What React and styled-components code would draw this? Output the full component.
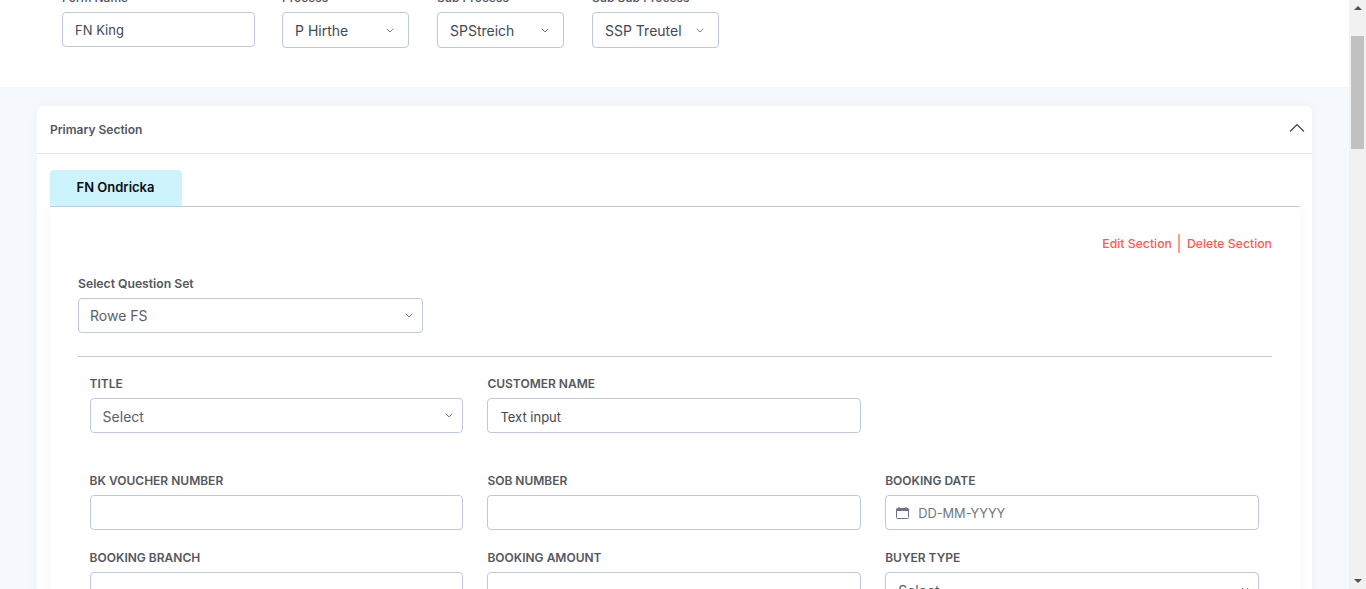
import React from 'react';
import styled, { createGlobalStyle } from 'styled-components';

const GlobalStyle = createGlobalStyle`
  html, body { margin: 0; padding: 0; height: 100%; overflow: hidden; background: #fff; }
  body { font-family: Inter, "Noto Sans", sans-serif; color: #4f5156; }
  * { box-sizing: border-box; }
`;

const Screen = styled.div`
  display: flex;
  width: 1366px;
  height: 589px;
  overflow: hidden;
`;

const Page = styled.main`
  flex: 1;
  min-width: 0;
  height: 589px;
  overflow: hidden;
  background: #f5f8fd;
`;

const TopBar = styled.section`
  display: flex;
  align-items: flex-start;
  gap: 28px;
  height: 117px;
  margin-top: -30px;
  padding: 24px 0 0 62px;
  background: #fff;
`;

const TopField = styled.div`
  display: flex;
  flex-direction: column;
  gap: 10px;
  width: ${p => p.$width}px;
  margin-right: ${p => p.$gapFix || 0}px;
`;

const TopLabel = styled.label`
  font-size: 12px;
  line-height: 8px;
  font-weight: 500;
  color: #4f5156;
  white-space: nowrap;
`;

const Box = styled.div`
  display: flex;
  align-items: center;
  justify-content: space-between;
  height: ${p => p.$height || 35}px;
  padding: 0 ${p => p.$padRight || 9}px 0 ${p => p.$padLeft || 12}px;
  background: #fff;
  border: 1px solid #bfc7da;
  border-radius: 4px;
  font-size: ${p => p.$small ? 13 : 14}px;
  color: ${p => p.$muted ? '#5b6068' : '#45484f'};
  white-space: nowrap;
`;

const BoxValue = styled.span`
  padding-top: ${p => p.$drop}px;
`;

const Card = styled.section`
  margin: 19px 37px 0;
  background: #fff;
  border-radius: 6px 6px 0 0;
  box-shadow: 0 0 10px rgba(120, 140, 190, 0.06);
`;

const CardHeader = styled.header`
  display: flex;
  align-items: center;
  justify-content: space-between;
  height: 48px;
  padding: 0 7px 0 13px;
  border-bottom: 1px solid #e3e5ea;
`;

const CardTitle = styled.h2`
  margin: 0;
  font-size: 12px;
  font-weight: 600;
  color: #55575c;
`;

const CollapseIcon = styled.svg`
  margin-bottom: 3px;
`;

const CardBody = styled.div`
  padding: 16px 12px 0 13px;
`;

const Tabs = styled.nav`
  display: flex;
  border-bottom: 1px solid #c5cbde;
`;

const Tab = styled.button`
  width: 132px;
  height: 36px;
  padding: 0 1px 2px 0;
  border: 0;
  border-radius: 4px 4px 0 0;
  background: #cdf3fd;
  font-family: inherit;
  font-size: 13px;
  font-weight: 600;
  color: #0c0d10;
`;

const Panel = styled.div`
  padding: 27px 28px 0;
  background: #fff;
  box-shadow: 0 0 12px rgba(120, 140, 190, 0.07);
`;

const SectionActions = styled.div`
  display: flex;
  justify-content: flex-end;
  align-items: center;
  height: 19px;
  font-size: 12.25px;
  font-weight: 500;
  color: #fb5b4f;
`;

const ActionLink = styled.a`
  padding: ${p => p.$first ? '0 6px 0 0' : '0 0 0 7px'};
  line-height: 19px;
  border-left: ${p => p.$first ? '0' : '2px solid #fba07f'};
`;

const QuestionSet = styled.div`
  display: flex;
  flex-direction: column;
  gap: 7px;
  width: 345px;
  margin-top: 24px;
`;

const QuestionLabel = styled.label`
  font-size: 12.2px;
  line-height: 14px;
  font-weight: 600;
  color: #55575c;
  white-space: nowrap;
`;

const FieldLabel = styled.label`
  padding-top: 1px;
  font-size: 12px;
  line-height: 14px;
  font-weight: 600;
  color: #55575c;
  white-space: nowrap;
`;

const Divider = styled.hr`
  height: 1px;
  margin: 23px 0 0;
  border: 0;
  background: #c5cbde;
`;

const FieldGrid = styled.div`
  display: grid;
  grid-template-columns: repeat(3, 1fr);
  column-gap: 24px;
  row-gap: 20px;
  margin: ${p => p.$top}px 13px 0 11.6px;
`;

const Field = styled.div`
  display: flex;
  flex-direction: column;
  gap: 7px;
`;

const DateValue = styled.span`
  display: flex;
  align-items: center;
  gap: 9px;
  margin-left: -2px;
  font-size: 12.8px;
  color: #707780;
`;

const ScrollTrack = styled.aside`
  display: flex;
  flex-direction: column;
  align-items: center;
  justify-content: space-between;
  width: 17px;
  height: 589px;
  padding: 6px 0;
  background: #f1f1f1;
`;

const ScrollArrow = styled.span`
  width: 0;
  height: 0;
  border-left: 4px solid transparent;
  border-right: 4px solid transparent;
  ${p => p.$up ? 'border-bottom: 4px solid #505050;' : 'border-top: 4px solid #505050;'}
`;

const ScrollThumb = styled.div`
  position: absolute;
  top: 36px;
  left: 1351px;
  width: 13px;
  height: 113px;
  background: #c1c1c1;
`;

const Chevron = () => (
  <svg width="8" height="5" viewBox="0 0 8 5" fill="none" stroke="#7a808c" strokeWidth="1">
    <path d="M.8.8 4 4 7.2.8" />
  </svg>
);

const ChevronUp = () => (
  <CollapseIcon width="16" height="16" viewBox="0 0 16 16" fill="none" stroke="#3c3d40" strokeWidth="1.1">
    <path d="M1 11.5 8 4.5l7 7" />
  </CollapseIcon>
);

const CalendarIcon = () => (
  <svg width="13" height="12" viewBox="0 0 13 12" fill="none">
    <path d="M3 0v2M10 0v2" stroke="#6c7585" strokeWidth="1.2" />
    <rect x=".5" y="1.5" width="12" height="10" rx="1" stroke="#6c7585" strokeWidth="1" />
    <rect x=".5" y="1.5" width="12" height="2.5" fill="#6c7585" />
  </svg>
);

const topFields = [
  { label: 'Form Name', value: 'FN King', width: 193, input: true },
  { label: 'Process', value: 'P Hirthe', width: 127 },
  { label: 'Sub Process', value: 'SPStreich', width: 127 },
  { label: 'Sub Sub Process', value: 'SSP Treutel', width: 127 },
];

const firstRow = [
  { label: 'TITLE', value: 'Select', select: true },
  { label: 'CUSTOMER NAME', value: 'Text input' },
];

const lowerFields = [
  { label: 'BK VOUCHER NUMBER' },
  { label: 'SOB NUMBER' },
  { label: 'BOOKING DATE', date: true },
  { label: 'BOOKING BRANCH' },
  { label: 'BOOKING AMOUNT' },
  { label: 'BUYER TYPE', value: 'Select', select: true },
];

const FormField = ({ label, value, select, date }) => (
  <Field>
    <FieldLabel>{label}</FieldLabel>
    <Box $muted={select} $small={!select}>
      {date
        ? <DateValue><CalendarIcon /><BoxValue $drop={2}>DD-MM-YYYY</BoxValue></DateValue>
        : <BoxValue $drop={select ? 1 : 2}>{value}</BoxValue>}
      {select && <Chevron />}
    </Box>
  </Field>
);

export default function App() {
  return (
    <Screen>
      <GlobalStyle />
      <Page>
        <TopBar>
          {topFields.map((f, i) => (
            <TopField key={f.label} $width={f.width} $gapFix={i === 0 ? -1 : 0}>
              <TopLabel>{f.label}</TopLabel>
              <Box $height={f.input ? 35 : 36} $padRight={14} $small={f.input}>
                <span>{f.value}</span>
                {!f.input && <Chevron />}
              </Box>
            </TopField>
          ))}
        </TopBar>
        <Card>
          <CardHeader>
            <CardTitle>Primary Section</CardTitle>
            <ChevronUp />
          </CardHeader>
          <CardBody>
            <Tabs><Tab>FN Ondricka</Tab></Tabs>
            <Panel>
              <SectionActions>
                <ActionLink $first>Edit Section</ActionLink>
                <ActionLink>Delete Section</ActionLink>
              </SectionActions>
              <QuestionSet>
                <QuestionLabel>Select Question Set</QuestionLabel>
                <Box $muted $padLeft={11}>
                  <span>Rowe FS</span>
                  <Chevron />
                </Box>
              </QuestionSet>
              <Divider />
              <FieldGrid $top={19}>
                {firstRow.map(f => <FormField key={f.label} {...f} />)}
              </FieldGrid>
              <FieldGrid $top={40}>
                {lowerFields.map(f => <FormField key={f.label} {...f} />)}
              </FieldGrid>
            </Panel>
          </CardBody>
        </Card>
      </Page>
      <ScrollTrack>
        <ScrollArrow $up />
        <ScrollArrow />
      </ScrollTrack>
      <ScrollThumb />
    </Screen>
  );
}
